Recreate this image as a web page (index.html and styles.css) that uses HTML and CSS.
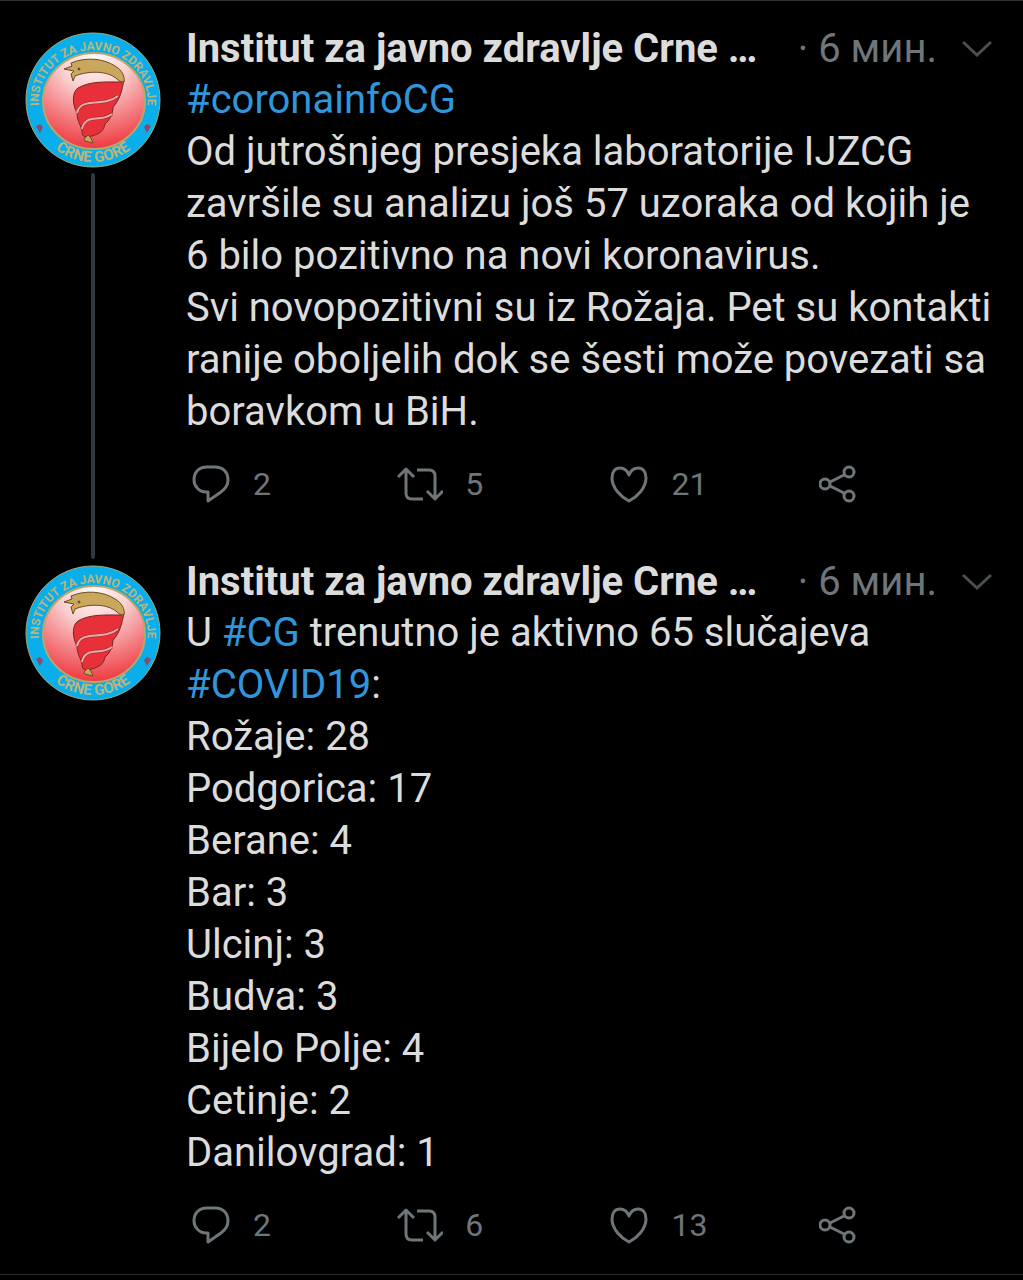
FILE: index.html
```
<!DOCTYPE html>
<html lang="sr">
<head>
    <meta charset="UTF-8">
    <meta name="viewport" content="width=device-width, initial-scale=1.0">
    <title>Institut za javno zdravlje Crne Gore</title>
    <link rel="stylesheet" href="styles.css">
</head>
<body>
    <!-- shared icons -->
    <svg class="sprite" width="0" height="0" aria-hidden="true">
        <defs>
            <radialGradient id="glow" cx="50%" cy="4%" r="98%">
                <stop offset="0" stop-color="#fffaf8"/>
                <stop offset="0.35" stop-color="#fad0d0"/>
                <stop offset="0.7" stop-color="#f37a7e"/>
                <stop offset="1" stop-color="#ee343c"/>
            </radialGradient>
            <path id="arc-top" d="M16 84 A55 51 0 0 1 68 18 A55 51 0 0 1 120 84"/>
            <path id="arc-bottom" d="M7 69 A61 61 0 0 0 129 69"/>
        </defs>
        <symbol id="logo" viewBox="0 0 136 136" overflow="visible">
            <circle cx="68" cy="68" r="67" fill="#0aaeea" stroke="#a3ab7c" stroke-width="1"/>
            <ellipse cx="69" cy="69" rx="51" ry="48" fill="url(#glow)" stroke="#b9a66b" stroke-width="2"/>
            <text class="logo-text" text-anchor="middle"><textPath href="#arc-top" startOffset="50%">INSTITUT ZA JAVNO ZDRAVLJE</textPath></text>
            <text class="logo-text large" text-anchor="middle"><textPath href="#arc-bottom" startOffset="50%">CRNE GORE</textPath></text>
            <path d="M11 94 L15 92 L18 95 L15 101 Z M119 95 L122 92 L126 94 L122 101 Z" fill="#8b4a6b"/>
            <path d="M96 50 C80 50 65 49 53 56 C47 60 47 72 52 81 C52 90 57 95 57 99 C57 104 59 105 62 105 C74 103 79 99 80 92 C86 87 88 80 88 75 C95 68 97 58 99 48 Z" fill="#e8303a" stroke="#6d2a22" stroke-width="1"/>
            <path d="M52 81 C56 64 78 76 93 64" fill="none" stroke="#8d2a28" stroke-width="3"/>
            <path d="M52 81 C56 64 78 76 93 64" fill="none" stroke="#f5a9a6" stroke-width="2"/>
            <path d="M57 97 C60 81 75 91 87 82" fill="none" stroke="#8d2a28" stroke-width="3"/>
            <path d="M57 97 C60 81 75 91 87 82" fill="none" stroke="#f5a9a6" stroke-width="2"/>
            <path d="M59 107 L63 103 L66 106 L68 111 L60 109 Z" fill="#c9a75c" stroke="#6d4a22" stroke-width="1"/>
            <path d="M39 37 L47 34 L46 31 C60 25 78 26 90 34 C97 38 100 44 99 50 C96 50 94 49 92 47 C82 38 62 39 50 44 L48 49 L46 42 L49 39 Z" fill="#c9a75c" stroke="#6d4a22" stroke-width="1"/>
            <circle cx="54" cy="37" r="1" fill="#8a6f35" stroke="#5c4520"/>
        </symbol>
        <symbol id="chevron" viewBox="0 0 30 18">
            <path d="M1 2 L15 15 L29 2"/>
        </symbol>
        <symbol id="reply" viewBox="0 0 40 40">
            <path d="M17 28 H15 C8 28 3 22 3 16 C3 8 8 3 16 3 H24 C32 3 37 8 37 16 C37 21 34 25 30 28 L17 37 Z"/>
        </symbol>
        <symbol id="retweet" viewBox="0 0 46 40">
            <path d="M1 13 L9 5 L17 13 M9 6 V29 Q9 35 15 35 H26 M20 6 H32 Q38 6 38 12 V35 M30 27 L38 35 L46 27"/>
        </symbol>
        <symbol id="like" viewBox="0 0 40 40">
            <path d="M19 11 C17 6 14 4 10 4 C5 4 2 8 2 14 C2 24 11 33 19 37 C27 33 36 24 36 14 C36 8 33 4 28 4 C24 4 21 6 19 11 Z"/>
        </symbol>
        <symbol id="share" viewBox="0 0 40 40">
            <circle cx="6" cy="20" r="5"/>
            <circle cx="30" cy="8" r="5"/>
            <circle cx="30" cy="32" r="5"/>
            <path d="M11 18 L25 11 M11 22 L25 29"/>
        </symbol>
    </svg>

    <main class="thread">
        <article class="tweet">
            <div class="side">
                <svg class="avatar" role="img" aria-label="Logo"><use href="#logo"/></svg>
                <div class="line"></div>
            </div>
            <div class="body">
                <header class="head">
                    <h2 class="name">Institut za javno zdravlje Crne …</h2>
                    <span class="time">· <time>6 мин.</time></span>
                    <button class="more" type="button" aria-label="Više"><svg class="chevron"><use href="#chevron"/></svg></button>
                </header>
                <p class="text"><a href="#">#coronainfoCG</a><br>
                    Od jutrošnjeg presjeka laboratorije IJZCG<br>
                    završile su analizu još 57 uzoraka od kojih je<br>
                    6 bilo pozitivno na novi koronavirus.<br>
                    Svi novopozitivni su iz Rožaja. Pet su kontakti<br>
                    ranije oboljelih dok se šesti može povezati sa<br>
                    boravkom u BiH.</p>
                <footer class="actions">
                    <button type="button"><svg class="icon"><use href="#reply"/></svg>2</button>
                    <button type="button"><svg class="icon wide"><use href="#retweet"/></svg>5</button>
                    <button type="button"><svg class="icon"><use href="#like"/></svg>21</button>
                    <button type="button" aria-label="Podijeli"><svg class="icon"><use href="#share"/></svg></button>
                </footer>
            </div>
        </article>

        <article class="tweet">
            <div class="side">
                <svg class="avatar" role="img" aria-label="Logo"><use href="#logo"/></svg>
            </div>
            <div class="body">
                <header class="head">
                    <h2 class="name">Institut za javno zdravlje Crne …</h2>
                    <span class="time">· <time>6 мин.</time></span>
                    <button class="more" type="button" aria-label="Više"><svg class="chevron"><use href="#chevron"/></svg></button>
                </header>
                <p class="text">U <a href="#">#CG</a> trenutno je aktivno 65 slučajeva<br>
                    <a href="#">#COVID19</a>:<br>
                    Rožaje: 28<br>
                    Podgorica: 17<br>
                    Berane: 4<br>
                    Bar: 3<br>
                    Ulcinj: 3<br>
                    Budva: 3<br>
                    Bijelo Polje: 4<br>
                    Cetinje: 2<br>
                    Danilovgrad: 1</p>
                <footer class="actions">
                    <button type="button"><svg class="icon"><use href="#reply"/></svg>2</button>
                    <button type="button"><svg class="icon wide"><use href="#retweet"/></svg>6</button>
                    <button type="button"><svg class="icon"><use href="#like"/></svg>13</button>
                    <button type="button" aria-label="Podijeli"><svg class="icon"><use href="#share"/></svg></button>
                </footer>
            </div>
        </article>
    </main>
</body>
</html>
```
FILE: styles.css
```
body {
    margin: 0;
    background-color: #000;
    color: #dcdcdc;
    font-family: Roboto, "Liberation Sans", sans-serif;
    font-size: 40px;
}

.sprite {
    position: absolute;
}

.thread {
    border-top: 1px solid #2f3131;
    border-bottom: 1px solid #2a2a2a;
    padding-top: 23px;
}

.tweet {
    display: flex;
    gap: 25px;
    padding-left: 25px;
}

.side {
    display: flex;
    flex-direction: column;
    align-items: center;
    padding-top: 8px;
}

.avatar {
    width: 136px;
    height: 136px;
    overflow: visible;
}

.logo-text {
    fill: #b9b57c;
    font-size: 12px;
    font-weight: bold;
}

.large {
    font-size: 15px;
}

.line {
    flex: 1;
    width: 4px;
    margin: 5px 0 -2px;
    border-radius: 2px;
    background-color: #31393e;
}

.body {
    flex: 1;
    min-width: 0;
}

.head {
    display: flex;
    align-items: center;
    padding-right: 31px;
    line-height: 50px;
}

.name {
    flex: 1;
    margin: 0;
    font-size: 40px;
    white-space: nowrap;
}

.time {
    color: #6f767a;
    white-space: nowrap;
}

button {
    border: none;
    padding: 0;
    background: none;
    color: #6f767a;
    font-family: inherit;
    font-size: 32px;
    cursor: pointer;
}

svg {
    flex-shrink: 0;
}

.more {
    display: flex;
    margin-left: 25px;
}

.chevron {
    width: 30px;
    height: 18px;
    fill: none;
    stroke: #4a4f52;
    stroke-width: 3;
}

.text {
    margin: 0;
    line-height: 52px;
    white-space: nowrap;
}

.text a {
    color: #3096dc;
    text-decoration: none;
}

.actions {
    display: grid;
    grid-template-columns: repeat(4, 1fr);
    padding: 26px 0 53px;
}

.tweet:last-child .actions {
    padding-bottom: 29px;
}

.actions button {
    display: flex;
    align-items: center;
    gap: 22px;
    height: 40px;
    padding-left: 5px;
}

.icon {
    width: 40px;
    height: 40px;
    fill: none;
    stroke: #6f767a;
    stroke-width: 3;
    stroke-linejoin: round;
}

.wide {
    width: 46px;
    margin-left: -3px;
}
```
